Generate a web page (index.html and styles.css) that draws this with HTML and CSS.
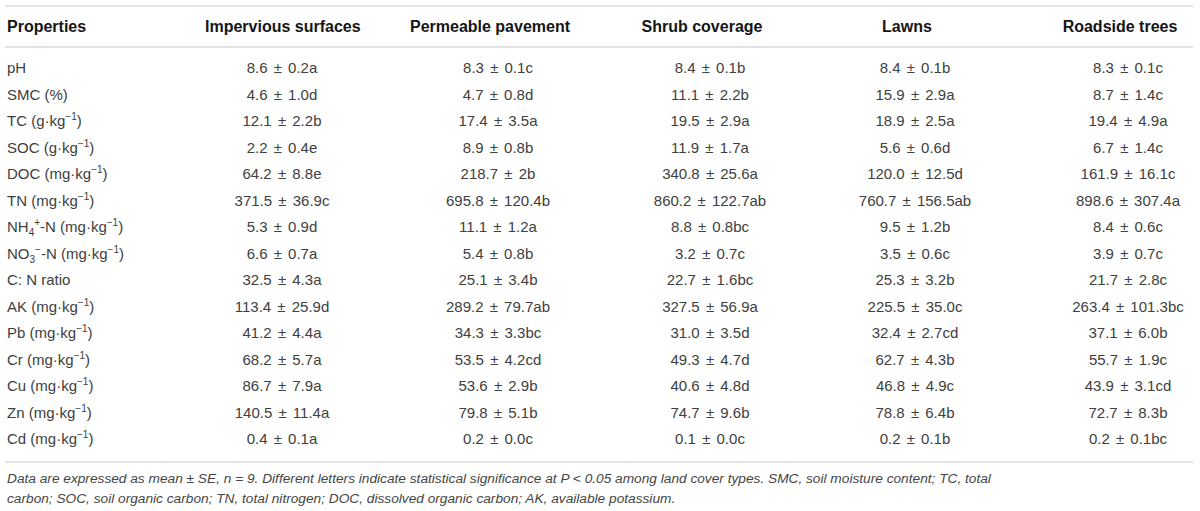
FILE: index.html
```html
<!DOCTYPE html>
<html lang="en">
<head>
    <meta charset="UTF-8">
    <title>Soil properties by land cover type</title>
    <link rel="stylesheet" href="styles.css">
</head>
<body>
    <div class="wrap">
        <table class="data-table">
            <colgroup>
                <col class="c-prop">
                <col class="c1">
                <col class="c2">
                <col class="c3">
                <col class="c4">
                <col class="c5">
            </colgroup>
            <thead>
                <tr>
                    <th class="left">Properties</th>
                    <th>Impervious surfaces</th>
                    <th>Permeable pavement</th>
                    <th>Shrub coverage</th>
                    <th>Lawns</th>
                    <th>Roadside trees</th>
                </tr>
            </thead>
            <tbody>
                <tr><td class="left">pH</td><td>8.6 ± 0.2a</td><td>8.3 ± 0.1c</td><td>8.4 ± 0.1b</td><td>8.4 ± 0.1b</td><td>8.3 ± 0.1c</td></tr>
                <tr><td class="left">SMC (%)</td><td>4.6 ± 1.0d</td><td>4.7 ± 0.8d</td><td>11.1 ± 2.2b</td><td>15.9 ± 2.9a</td><td>8.7 ± 1.4c</td></tr>
                <tr><td class="left">TC (g·kg<sup>−1</sup>)</td><td>12.1 ± 2.2b</td><td>17.4 ± 3.5a</td><td>19.5 ± 2.9a</td><td>18.9 ± 2.5a</td><td>19.4 ± 4.9a</td></tr>
                <tr><td class="left">SOC (g·kg<sup>−1</sup>)</td><td>2.2 ± 0.4e</td><td>8.9 ± 0.8b</td><td>11.9 ± 1.7a</td><td>5.6 ± 0.6d</td><td>6.7 ± 1.4c</td></tr>
                <tr><td class="left">DOC (mg·kg<sup>−1</sup>)</td><td>64.2 ± 8.8e</td><td>218.7 ± 2b</td><td>340.8 ± 25.6a</td><td>120.0 ± 12.5d</td><td>161.9 ± 16.1c</td></tr>
                <tr><td class="left">TN (mg·kg<sup>−1</sup>)</td><td>371.5 ± 36.9c</td><td>695.8 ± 120.4b</td><td>860.2 ± 122.7ab</td><td>760.7 ± 156.5ab</td><td>898.6 ± 307.4a</td></tr>
                <tr><td class="left">NH<sub>4</sub><sup>+</sup>-N (mg·kg<sup>−1</sup>)</td><td>5.3 ± 0.9d</td><td>11.1 ± 1.2a</td><td>8.8 ± 0.8bc</td><td>9.5 ± 1.2b</td><td>8.4 ± 0.6c</td></tr>
                <tr><td class="left">NO<sub>3</sub><sup>−</sup>-N (mg·kg<sup>−1</sup>)</td><td>6.6 ± 0.7a</td><td>5.4 ± 0.8b</td><td>3.2 ± 0.7c</td><td>3.5 ± 0.6c</td><td>3.9 ± 0.7c</td></tr>
                <tr><td class="left">C: N ratio</td><td>32.5 ± 4.3a</td><td>25.1 ± 3.4b</td><td>22.7 ± 1.6bc</td><td>25.3 ± 3.2b</td><td>21.7 ± 2.8c</td></tr>
                <tr><td class="left">AK (mg·kg<sup>−1</sup>)</td><td>113.4 ± 25.9d</td><td>289.2 ± 79.7ab</td><td>327.5 ± 56.9a</td><td>225.5 ± 35.0c</td><td>263.4 ± 101.3bc</td></tr>
                <tr><td class="left">Pb (mg·kg<sup>−1</sup>)</td><td>41.2 ± 4.4a</td><td>34.3 ± 3.3bc</td><td>31.0 ± 3.5d</td><td>32.4 ± 2.7cd</td><td>37.1 ± 6.0b</td></tr>
                <tr><td class="left">Cr (mg·kg<sup>−1</sup>)</td><td>68.2 ± 5.7a</td><td>53.5 ± 4.2cd</td><td>49.3 ± 4.7d</td><td>62.7 ± 4.3b</td><td>55.7 ± 1.9c</td></tr>
                <tr><td class="left">Cu (mg·kg<sup>−1</sup>)</td><td>86.7 ± 7.9a</td><td>53.6 ± 2.9b</td><td>40.6 ± 4.8d</td><td>46.8 ± 4.9c</td><td>43.9 ± 3.1cd</td></tr>
                <tr><td class="left">Zn (mg·kg<sup>−1</sup>)</td><td>140.5 ± 11.4a</td><td>79.8 ± 5.1b</td><td>74.7 ± 9.6b</td><td>78.8 ± 6.4b</td><td>72.7 ± 8.3b</td></tr>
                <tr><td class="left">Cd (mg·kg<sup>−1</sup>)</td><td>0.4 ± 0.1a</td><td>0.2 ± 0.0c</td><td>0.1 ± 0.0c</td><td>0.2 ± 0.1b</td><td>0.2 ± 0.1bc</td></tr>
            </tbody>
        </table>
        <p class="caption">Data are expressed as mean ± SE, <i>n</i> = 9. Different letters indicate statistical significance at <i>P</i> &lt; 0.05 among land cover types. SMC, soil moisture content; TC, total carbon; SOC, soil organic carbon; TN, total nitrogen; DOC, dissolved organic carbon; AK, available potassium.</p>
    </div>
</body>
</html>
```

FILE: styles.css
```css
body {
    margin: 0;
    background-color: #fff;
    font-family: "Liberation Sans", Arial, sans-serif;
    color: #404040;
}
.wrap {
    padding: 5px 7px 0 5px;
}
.data-table {
    width: 1188px;
    border-collapse: collapse;
    table-layout: fixed;
    border-top: 2px solid #e2e2e2;
    border-bottom: 2px solid #e2e2e2;
}
.c-prop { width: 200px; }
.c1 { width: 138px; }
.c2 { width: 294px; }
.c3 { width: 130px; }
.c4 { width: 280px; }
.c5 { width: 146px; }
th {
    font-size: 16px;
    font-weight: bold;
    color: #151515;
    text-align: center;
    white-space: nowrap;
    height: 39px;
    padding: 0;
    border-bottom: 2px solid #e2e2e2;
}
td {
    font-size: 15px;
    text-align: center;
    white-space: nowrap;
    word-spacing: 2px;
    height: 26.5px;
    padding: 0 0 0 16px;
    line-height: 18px;
}
.pm {
    font-size: 16px;
}
.left {
    text-align: left;
    padding-left: 2px;
    word-spacing: 0;
}
tbody tr:first-child td {
    padding-top: 7px;
}
tbody tr:last-child td {
    padding-bottom: 8px;
}
sup, sub {
    font-size: 10px;
    line-height: 0;
}
.caption {
    margin: 6px 0 0 2px;
    font-size: 13.7px;
    font-style: italic;
    line-height: 20px;
    color: #454545;
    width: 1010px;
}
.caption i {
    font-style: italic;
}
```
